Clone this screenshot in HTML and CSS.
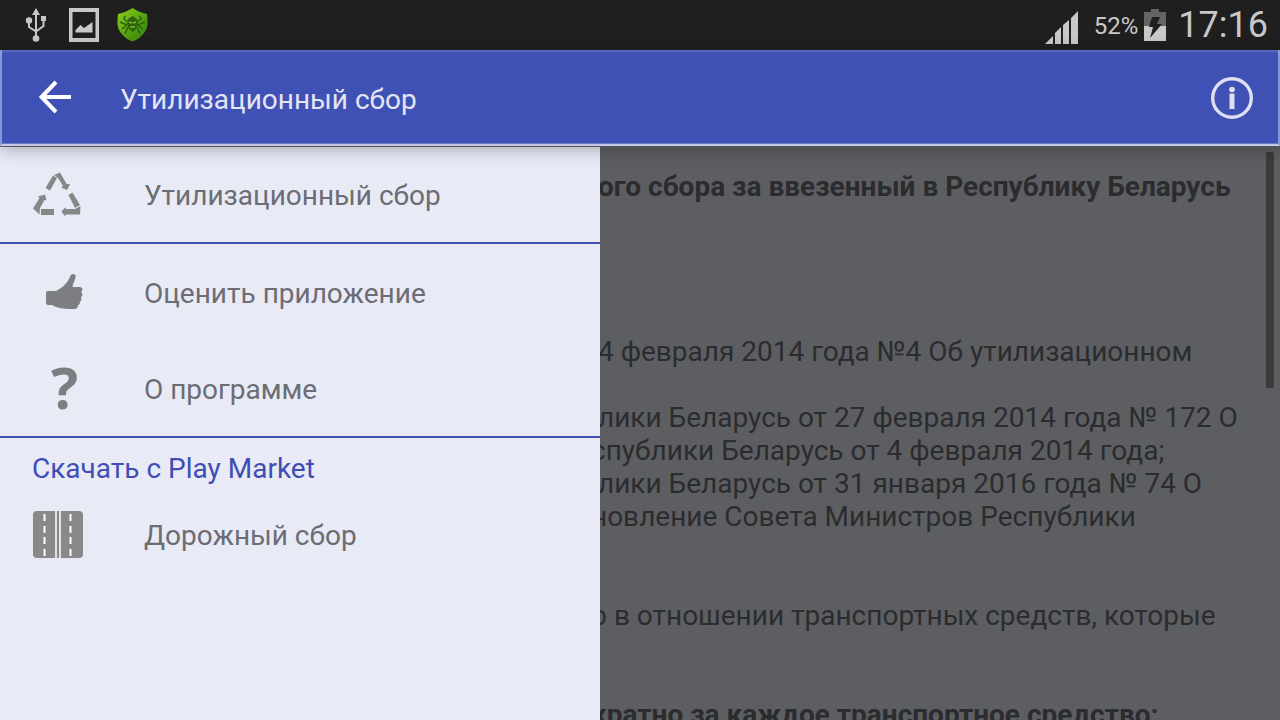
FILE: index.html
```html
<!DOCTYPE html>
<html lang="ru">
<head>
<meta charset="utf-8">
<meta name="viewport" content="width=device-width, initial-scale=1">
<title>Утилизационный сбор</title>
<link rel="stylesheet" href="styles.css">
</head>
<body>
<div class="screen">
  <div class="status">
    <div class="status-left">
      <svg class="usb" width="22" height="34" viewBox="0 0 22 34" aria-hidden="true">
        <path d="M11 0l4 7h-3v25h-2V7H7z" fill="#c8c8c8"/>
        <path d="M4 13v6l7 4.500M18.500 11v7L11 23.500" fill="none" stroke="#c8c8c8" stroke-width="2"/>
        <circle cx="4" cy="12.500" r="3.200" fill="#c8c8c8"/>
        <rect x="16" y="8" width="5" height="5" fill="#c8c8c8"/>
        <circle cx="11" cy="30.500" r="3.300" fill="#c8c8c8"/>
      </svg>
      <svg class="image" width="30" height="34" viewBox="0 0 30 34" aria-hidden="true">
        <path d="M0 0h30v34H0zM3.500 4v26h23V4z" fill="#c8c8c8" fill-rule="evenodd"/>
        <path d="M6.500 24.500V22l5-5 3.500 3 8.500-6v10.500z" fill="#c8c8c8"/>
      </svg>
      <svg class="shield" width="31" height="34" viewBox="0 0 31 34" aria-hidden="true">
        <defs><linearGradient id="g" x1="0" y1="0" x2="1" y2="1"><stop offset="0" stop-color="#8fd01c"/><stop offset=".5" stop-color="#5aa512"/><stop offset="1" stop-color="#32800c"/></linearGradient></defs>
        <path d="M15.500 0C20 3 25 5 30 6c1 9 1 14-3 19-3 4-7 7-11.500 8.500C11 32 7 29 4 25 0 20 0 15 1 6 6 5 11 3 15.500 0z" fill="url(#g)"/>
        <g fill="none" stroke="#2a5f0d" stroke-width="1.400">
          <path d="M8 8l-1 3 4 3M23 8l1 3-4 3M3 14l7 3M28 14l-7 3M5 21l5-4M26 21l-5-4M8 26l3-7M23 26l-3-7"/>
        </g>
        <path d="M11 11l4.500-3 4.500 3 1 5-2 5-3.500 3-3.500-3-2-5z" fill="#2c630d"/>
        <path d="M12 14l3 1M19 14l-3 1M13 19h5" stroke="#83b82c" stroke-width="1.500"/>
      </svg>
    </div>
    <div class="status-right">
      <svg class="signal" width="33" height="33" viewBox="0 0 33 33" aria-hidden="true">
        <path d="M0 33l8-8v8zM10 33V22l6-6v17zM18 33V14l6-5v24zM26 33V7l7-7v33z" fill="#c8c8c8"/>
      </svg>
      <span class="percent">52%</span>
      <svg class="battery" width="22" height="32" viewBox="0 0 22 32" aria-hidden="true">
        <path d="M0 3h7V0h8v3h7v14H0z" fill="#646464"/>
        <path d="M0 17h22v15H0z" fill="#c8c8c8"/>
        <path d="M8 8h8l-3 7h5L6 29l3-11H5z" fill="#1f1f1f"/>
      </svg>
      <span class="clock">17:16</span>
    </div>
  </div>

  <header class="appbar">
    <button class="icon-button back" aria-label="Назад">
      <svg width="32" height="34" viewBox="0 0 32 34" aria-hidden="true"><path d="M17 2L2.500 17 17 32M2.500 17H32" fill="none" stroke="#fff" stroke-width="4"/></svg>
    </button>
    <h1 class="title">Утилизационный сбор</h1>
    <button class="icon-button info" aria-label="Информация">
      <svg width="42" height="42" viewBox="0 0 42 42" aria-hidden="true"><circle cx="21" cy="21" r="19.300" fill="none" stroke="#dfe1f3" stroke-width="3.400"/><circle cx="21" cy="12.500" r="2.800" fill="#dfe1f3"/><rect x="18.500" y="16.500" width="5" height="15.500" fill="#dfe1f3"/></svg>
    </button>
  </header>

  <div class="main">
    <nav class="drawer">
      <a class="item" href="#fee">
        <span class="icon"><svg width="50" height="46" viewBox="0 0 50 46" aria-hidden="true"><g fill="#868787">
          <path d="M13.500 16L21 3.500 25 6l-7 12.500z"/>
          <path d="M22 3l6-2.500 2 3.500 4.700 8H38l-3 6-6-2.500 2-1.500-5-8z"/>
          <path d="M36.500 23l4-2.500L48 33l-5 3z"/>
          <path d="M48.500 34l-.5 8.500H33.500l-.5 2-3.500-5 3.500-4 1 1.500h9z"/>
          <path d="M9 37h13v6H9z"/>
          <path d="M7.500 42.500L1 36.500 7.500 26 6 24.500l7-2 1.500 6-2-.5L8 36z"/>
        </g></svg></span>
        <span>Утилизационный сбор</span>
      </a>
      <hr class="rule">
      <a class="item" href="#rate">
        <span class="icon thumb"><svg width="37" height="37" viewBox="0 0 37 37" aria-hidden="true"><path d="M0 19q0-2 2-2h8c6-3 11-8 13-12 1-3 2-5 4-5 3 0 3 3 2 5-1 4-3 6-2 8h7c3 0 3 4 1 5 2 1 2 4 0 5 1 2 0 4-1 5 0 2-1 3-2 3 0 4-3 4-5 4-10 0-16-1-21-4H2q-2 0-2-2z" fill="#7d7e82"/></svg></span>
        <span>Оценить приложение</span>
      </a>
      <a class="item" href="#about">
        <span class="icon question" aria-hidden="true">?</span>
        <span>О программе</span>
      </a>
      <hr class="rule">
      <h2 class="heading">Скачать с Play Market</h2>
      <a class="item" href="#road">
        <span class="icon"><svg width="51" height="48" viewBox="0 0 51 48" aria-hidden="true"><rect x="1" width="50" height="47" rx="4" fill="#898989"/><path d="M24 0v47M28 0v47" stroke="#fff" stroke-width="1.500"/><path d="M12.500 3v7M12.500 15v7M12.500 26v7M12.500 38v7M38.500 3v7M38.500 15v7M38.500 26v7M38.500 38v7" stroke="#fff" stroke-width="2"/></svg></span>
        <span>Дорожный сбор</span>
      </a>
    </nav>
    <main class="content">
      <p class="strong">ого сбора за ввезенный в Республику Беларусь</p>
      <p class="decree">4 февраля 2014 года №4 Об утилизационном</p>
      <p class="acts">лики Беларусь от 27 февраля 2014 года № 172 О</p>
      <p class="tucked">спублики Беларусь от 4 февраля 2014 года;</p>
      <p>лики Беларусь от 31 января 2016 года № 74 О</p>
      <p class="tucked">новление Совета Министров Республики</p>
      <p class="tucked scope">о в отношении транспортных средств, которые</p>
      <p class="tucked strong once">кратно за каждое транспортное средство:</p>
      <div class="scroll-thumb"></div>
    </main>
  </div>
</div>
</body>
</html>
```
FILE: styles.css
```css
* { box-sizing: border-box; }
body { margin: 0; font-family: Roboto, "Noto Sans", sans-serif; font-size: 28px; line-height: 33px; }
h1, h2, p, hr { margin: 0; font: inherit; }
svg { display: block; flex: none; }
.screen { height: 100vh; display: flex; flex-direction: column; overflow: hidden; }

.status { flex: none; height: 50px; padding: 0 12px 0 25px; display: flex; align-items: center; justify-content: space-between; background: #1f1f1f; color: #c8c8c8; }
.status-left, .status-right { display: flex; align-items: center; }
.status-left { gap: 18px; }
.image { margin-left: 4px; }
.signal { margin: 4px 16px 0 0; }
.percent { font-size: 24px; margin-right: 6px; padding-top: 3px; }
.clock { font-size: 36px; margin-left: 12px; }

.appbar { flex: none; position: relative; z-index: 1; height: 96px; padding: 0 25px 0 37px; display: flex; align-items: center; background: #3f51b5; color: #e3e5f5; border: solid #8c96d3; border-width: 0 2px 2px; border-bottom-color: #c3c8e8; box-shadow: inset 0 2px 1px #5868c0, inset 0 -1px 0 #6d7ac8, 0 1px 0 #55575b, 0 3px 16px rgba(0, 0, 0, .3); }
.icon-button { padding: 0; border: 0; background: none; cursor: pointer; }
.info { padding-top: 2px; }
.title { flex: 1; margin-left: 49px; padding-top: 4px; }

.main { flex: 1; min-height: 0; display: flex; }
.drawer { flex: 0 0 600px; background: #e8eaf6; overflow: hidden; }
.item { display: flex; align-items: center; height: 96px; padding: 2px 32px 0; color: #6c6d74; text-decoration: none; }
.icon { width: 112px; flex: none; }
.thumb { padding: 0 0 2px 14px; }
.question { padding: 0 0 4px 19px; color: #7d7e82; font: bold 57px/57px "Open Sans", sans-serif; }
.rule { height: 2px; border: 0; background: #3f51b5; }
.heading { height: 48px; padding: 14px 32px 0; color: #3f4db5; }

.content { flex: 1; min-width: 0; position: relative; padding-top: 24px; background: #5d5e62; color: #2b2c2e; overflow: hidden; white-space: nowrap; }
.content p { margin-left: -2px; }
.content .tucked { margin-left: -9px; }
.content .strong { font-weight: 700; }
.content .decree { margin-top: 132px; }
.content .acts { margin-top: 33px; }
.content .scope, .content .once { margin-top: 66px; }
.scroll-thumb { position: absolute; top: 6px; right: 6px; width: 8px; height: 236px; border-radius: 2px; background: #3b3b3c; }
```
